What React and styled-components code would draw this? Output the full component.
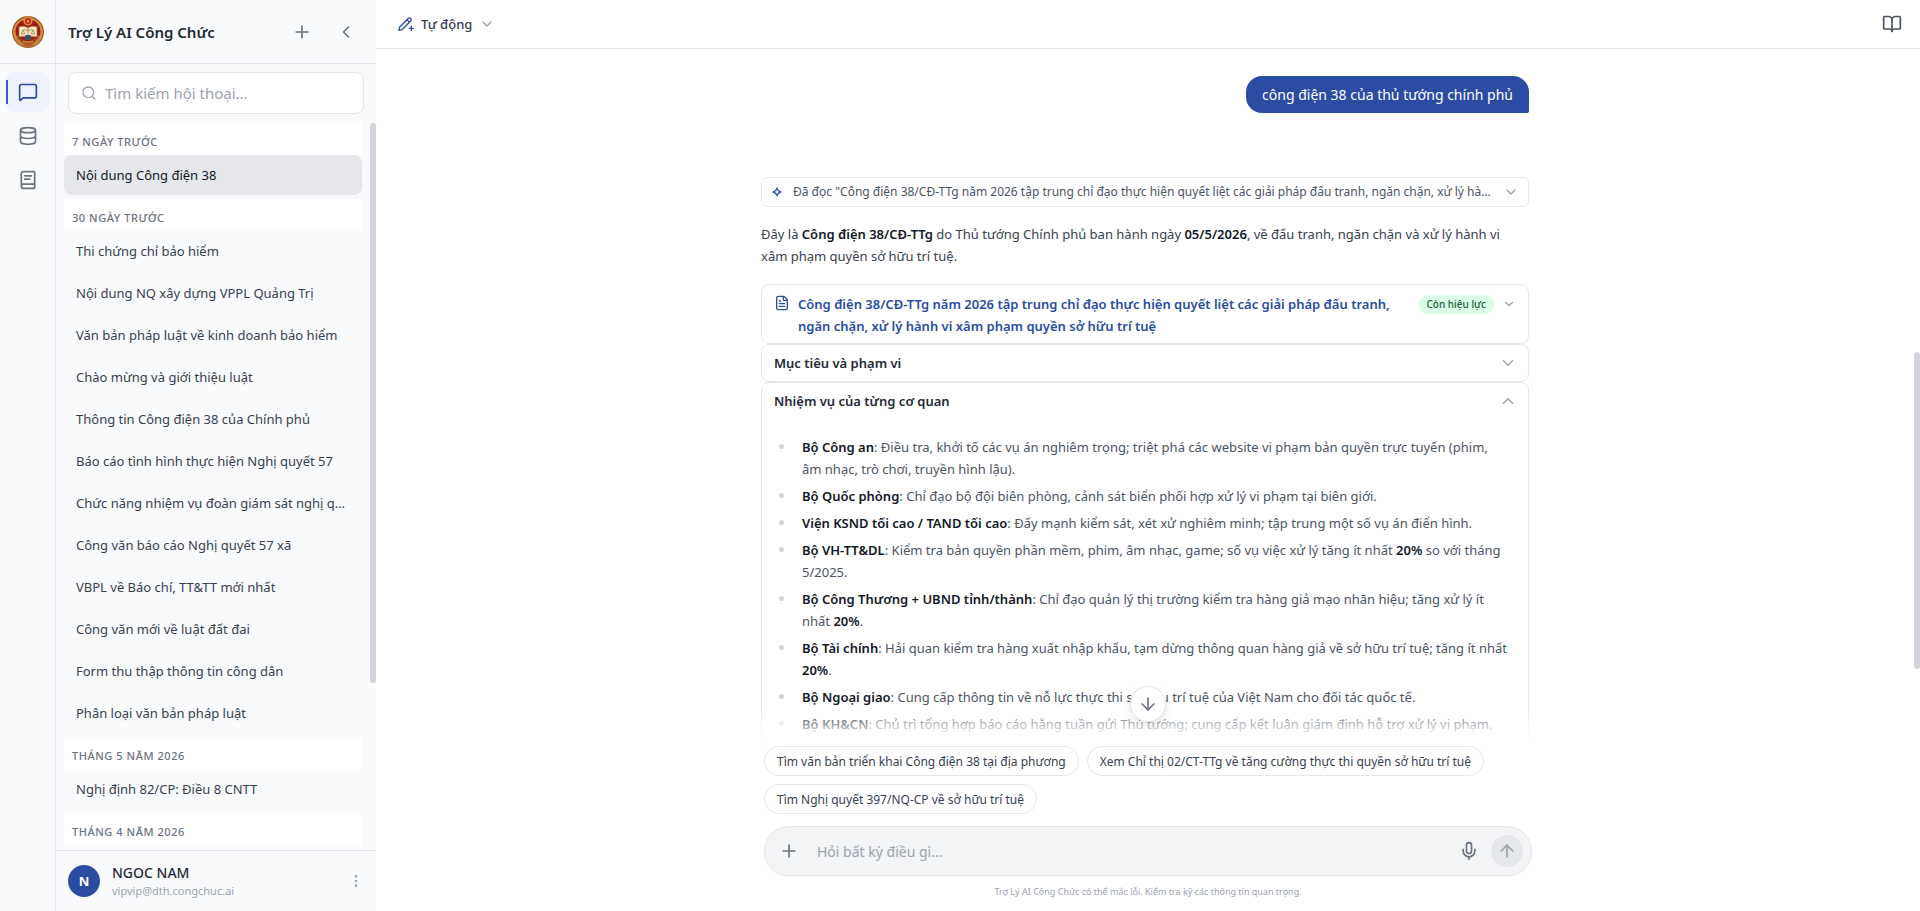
import { useState } from "react";
import styled, { createGlobalStyle } from "styled-components";
import {
  ArrowDown,
  ArrowUp,
  BookOpen,
  ChevronDown,
  ChevronLeft,
  ChevronUp,
  Database,
  EllipsisVertical,
  FileText,
  MessageSquare,
  Mic,
  Plus,
  Search,
} from "lucide-react";

const sections = [
  { title: "7 ngày trước", items: ["Nội dung Công điện 38"] },
  {
    title: "30 ngày trước",
    items: [
      "Thi chứng chỉ bảo hiểm",
      "Nội dung NQ xây dựng VPPL Quảng Trị",
      "Văn bản pháp luật về kinh doanh bảo hiểm",
      "Chào mừng và giới thiệu luật",
      "Thông tin Công điện 38 của Chính phủ",
      "Báo cáo tình hình thực hiện Nghị quyết 57",
      "Chức năng nhiệm vụ đoàn giám sát nghị quyết",
      "Công văn báo cáo Nghị quyết 57 xã",
      "VBPL về Báo chí, TT&TT mới nhất",
      "Công văn mới về luật đất đai",
      "Form thu thập thông tin công dân",
      "Phân loại văn bản pháp luật",
    ],
  },
  { title: "Tháng 5 năm 2026", items: ["Nghị định 82/CP: Điều 8 CNTT"] },
  { title: "Tháng 4 năm 2026", items: [] },
];

const docTitle =
  "Công điện 38/CĐ-TTg năm 2026 tập trung chỉ đạo thực hiện quyết liệt các giải pháp đấu tranh, ngăn chặn, xử lý hành vi xâm phạm quyền sở hữu trí tuệ";

const suggestions = [
  "Tìm văn bản triển khai Công điện 38 tại địa phương",
  "Xem Chỉ thị 02/CT-TTg về tăng cường thực thi quyền sở hữu trí tuệ",
  "Tìm Nghị quyết 397/NQ-CP về sở hữu trí tuệ",
];

const Logo = () => (
  <svg width="32" height="32" viewBox="0 0 32 32" aria-hidden="true">
    <circle cx="16" cy="16" r="16" fill="#a8622a" />
    <circle cx="16" cy="16" r="14.6" fill="#cf8f45" />
    <circle cx="16" cy="15.6" r="12.4" fill="#9c1a1a" />
    <path d="M3 17c1 8 7 12 13 12s12-4 13-12c-3 6-8 8-13 8S6 23 3 17z" fill="#bd7d35" />
    <path d="M6 22l5 4M26 22l-5 4M9 26l3-3M23 26l-3-3" stroke="#8c3a1c" strokeWidth="1" />
    <path d="M7 11c3-1 6-1 9 1 3-2 6-2 9-1v10c-3-1-6-1-9 1-3-2-6-2-9-1z" fill="#f6e8c8" stroke="#b98238" strokeWidth=".7" />
    <path d="M16 11v9M11 14h10M11 14l-1.8 4h3.6zM21 14l-1.8 4h3.6z" stroke="#b0813f" strokeWidth=".8" fill="none" />
    <circle cx="16" cy="5" r="4.6" fill="#cf8f45" />
    <circle cx="16" cy="5" r="3" fill="#c21f1a" />
    <path d="M16 3l.6 1.4 1.5.1-1.2 1 .4 1.5-1.3-.8-1.3.8.4-1.5-1.2-1 1.5-.1z" fill="#e8a04a" />
    <rect x="13" y="19" width="6" height="5" rx="1" fill="#3c5560" />
    <path d="M11 26.500h10v2.500c-3 1.500-7 1.500-10 0z" fill="#b3552a" />
  </svg>
);

const LibraryIcon = () => (
  <svg width="20" height="20" viewBox="0 0 24 24" fill="none" stroke="currentColor" strokeWidth="2" strokeLinecap="round" strokeLinejoin="round" aria-hidden="true">
    <path d="M4 19.500v-15A2.500 2.500 0 0 1 6.500 2H19a1 1 0 0 1 1 1v18a1 1 0 0 1-1 1H6.500a1 1 0 0 1 0-5H20" />
    <path d="M8 7h8M8 11h6" />
  </svg>
);

const PenIcon = () => (
  <svg width="16" height="16" viewBox="0 0 16 16" fill="none" stroke="currentColor" strokeWidth="1.300" strokeLinecap="round" strokeLinejoin="round" aria-hidden="true">
    <path d="M1 14.300l.5-3L10.200 2.500a1.700 1.700 0 0 1 2.500 2.500L4 13.700z" />
    <path d="M9 3.800L11.400 6.200M13.300 10.200v4.200M11.200 12.300h4.200" />
  </svg>
);

const SparkIcon = () => (
  <svg width="12" height="12" viewBox="0 0 12 12" fill="none" stroke="currentColor" strokeWidth="1.300" strokeLinejoin="round" aria-hidden="true">
    <path d="M6 2C6.400 4.300 7.700 5.600 10 6 7.700 6.400 6.400 7.700 6 10 5.600 7.700 4.300 6.400 2 6 4.300 5.600 5.600 4.300 6 2z" />
  </svg>
);

const App = () => {
  const [active, setActive] = useState("Nội dung Công điện 38");
  const [search, setSearch] = useState("");
  const [message, setMessage] = useState("");
  const [goalOpen, setGoalOpen] = useState(false);
  const [taskOpen, setTaskOpen] = useState(true);

  return (
    <>
      <GlobalStyle />
      <Page>
        <Rail>
          <RailLogo href="#" aria-label="Trang chủ">
            <Logo />
          </RailLogo>
          <RailNav>
            <RailButton $active aria-label="Hội thoại">
              <MessageSquare size={20} />
            </RailButton>
            <RailButton aria-label="Dữ liệu">
              <Database size={20} />
            </RailButton>
            <RailButton aria-label="Thư viện">
              <LibraryIcon />
            </RailButton>
          </RailNav>
        </Rail>

        <Sidebar>
          <SidebarHeader>
            <Brand>Trợ Lý AI Công Chức</Brand>
            <HeaderButton aria-label="Hội thoại mới">
              <Plus size={20} />
            </HeaderButton>
            <HeaderButton aria-label="Thu gọn">
              <ChevronLeft size={20} />
            </HeaderButton>
          </SidebarHeader>

          <SearchBox>
            <Search size={16} />
            <SearchInput
              type="text"
              aria-label="Tìm kiếm hội thoại"
              placeholder="Tìm kiếm hội thoại..."
              value={search}
              onChange={(e) => setSearch(e.target.value)}
            />
          </SearchBox>

          <History>
            <HistoryList>
              {sections.map((section) => (
                <Section key={section.title}>
                  <SectionTitle>{section.title}</SectionTitle>
                  {section.items.map((item) => (
                    <HistoryItem
                      key={item}
                      $active={item === active}
                      onClick={() => setActive(item)}
                    >
                      {item}
                    </HistoryItem>
                  ))}
                </Section>
              ))}
            </HistoryList>
            <ScrollThumb $top="0" $height="77%" />
          </History>

          <Account>
            <Avatar>N</Avatar>
            <AccountText>
              <AccountName>NGOC NAM</AccountName>
              <AccountMail>vipvip@dth.congchuc.ai</AccountMail>
            </AccountText>
            <MoreButton aria-label="Tùy chọn">
              <EllipsisVertical size={16} />
            </MoreButton>
          </Account>
        </Sidebar>

        <Main>
          <TopBar>
            <ModeButton>
              <PenIcon />
              <span>Tự động</span>
              <ChevronDown size={16} />
            </ModeButton>
            <GuideButton aria-label="Hướng dẫn">
              <BookOpen size={20} />
            </GuideButton>
          </TopBar>

          <Chat>
            <Thread>
              <UserMessage>công điện 38 của thủ tướng chính phủ</UserMessage>

              <Answer>
                <ReadButton>
                  <SparkIcon />
                  <ReadText>Đã đọc "{docTitle}"</ReadText>
                  <ChevronDown size={16} />
                </ReadButton>

                <Intro>
                  Đây là <Strong>Công điện 38/CĐ-TTg</Strong> do Thủ tướng Chính phủ ban hành
                  ngày <Strong>05/5/2026</Strong>, về đấu tranh, ngăn chặn và xử lý hành vi xâm
                  phạm quyền sở hữu trí tuệ.
                </Intro>

                <DocCard>
                  <FileText size={16} />
                  <DocLink href="#">{docTitle}</DocLink>
                  <Badge>Còn hiệu lực</Badge>
                  <DocToggle aria-label="Mở rộng">
                    <ChevronDown size={14} />
                  </DocToggle>
                </DocCard>

                <Panel>
                  <PanelHeader aria-expanded={goalOpen} onClick={() => setGoalOpen(!goalOpen)}>
                    <span>Mục tiêu và phạm vi</span>
                    {goalOpen ? <ChevronUp size={18} /> : <ChevronDown size={18} />}
                  </PanelHeader>
                </Panel>

                <Panel>
                  <PanelHeader aria-expanded={taskOpen} onClick={() => setTaskOpen(!taskOpen)}>
                    <span>Nhiệm vụ của từng cơ quan</span>
                    {taskOpen ? <ChevronUp size={18} /> : <ChevronDown size={18} />}
                  </PanelHeader>
                  {taskOpen && (
                    <TaskList>
                      <Task>
                        <Strong>Bộ Công an</Strong>: Điều tra, khởi tố các vụ án nghiêm trọng;
                        triệt phá các website vi phạm bản quyền trực tuyến (phim, âm nhạc, trò
                        chơi, truyền hình lậu).
                      </Task>
                      <Task>
                        <Strong>Bộ Quốc phòng</Strong>: Chỉ đạo bộ đội biên phòng, cảnh sát biển
                        phối hợp xử lý vi phạm tại biên giới.
                      </Task>
                      <Task>
                        <Strong>Viện KSND tối cao / TAND tối cao</Strong>: Đẩy mạnh kiểm sát, xét
                        xử nghiêm minh; tập trung một số vụ án điển hình.
                      </Task>
                      <Task>
                        <Strong>Bộ VH-TT&amp;DL</Strong>: Kiểm tra bản quyền phần mềm, phim, âm
                        nhạc, game; số vụ việc xử lý tăng ít nhất <Strong>20%</Strong> so với
                        tháng 5/2025.
                      </Task>
                      <Task>
                        <Strong>Bộ Công Thương + UBND tỉnh/thành</Strong>: Chỉ đạo quản lý thị
                        trường kiểm tra hàng giả mạo nhãn hiệu; tăng xử lý ít
                        nhất <Strong>20%</Strong>.
                      </Task>
                      <Task>
                        <Strong>Bộ Tài chính</Strong>: Hải quan kiểm tra hàng xuất nhập khẩu, tạm
                        dừng thông quan hàng giả về sở hữu trí tuệ; tăng ít
                        nhất <Strong>20%</Strong>.
                      </Task>
                      <Task>
                        <Strong>Bộ Ngoại giao</Strong>: Cung cấp thông tin về nỗ lực thực thi sở
                        hữu trí tuệ của Việt Nam cho đối tác quốc tế.
                      </Task>
                      <Task>
                        <Strong>Bộ KH&amp;CN</Strong>: Chủ trì tổng hợp báo cáo hằng tuần gửi Thủ
                        tướng; cung cấp kết luận giám định hỗ trợ xử lý vi phạm.
                      </Task>
                    </TaskList>
                  )}
                </Panel>
              </Answer>
            </Thread>
            <ScrollThumb $top="44%" $height="46%" />
          </Chat>

          <Dock>
            <JumpButton aria-label="Cuộn xuống">
              <ArrowDown size={20} />
            </JumpButton>
            <DockInner>
              <Chips>
                {suggestions.map((text) => (
                  <Chip key={text} onClick={() => setMessage(text)}>
                    {text}
                  </Chip>
                ))}
              </Chips>
              <Composer onSubmit={(e) => e.preventDefault()}>
                <ComposerButton type="button" aria-label="Đính kèm">
                  <Plus size={20} />
                </ComposerButton>
                <ComposerInput
                  type="text"
                  aria-label="Tin nhắn"
                  placeholder="Hỏi bất kỳ điều gì..."
                  value={message}
                  onChange={(e) => setMessage(e.target.value)}
                />
                <ComposerButton type="button" aria-label="Ghi âm">
                  <Mic size={20} />
                </ComposerButton>
                <SendButton type="submit" aria-label="Gửi">
                  <ArrowUp size={20} />
                </SendButton>
              </Composer>
              <Disclaimer>
                Trợ Lý AI Công Chức có thể mắc lỗi. Kiểm tra kỹ các thông tin quan trọng.
              </Disclaimer>
            </DockInner>
          </Dock>
        </Main>
      </Page>
    </>
  );
};

// Styled Components

const GlobalStyle = createGlobalStyle`
  * {
    box-sizing: border-box;
  }

  body {
    margin: 0;
    font-family: "Noto Sans", "Open Sans", sans-serif;
    font-size: 13px;
    color: #374151;
    background: #ffffff;
  }

  button,
  input {
    font: inherit;
    color: inherit;
    padding: 0;
    border: none;
    background: none;
  }

  button {
    cursor: pointer;
  }

  svg {
    flex-shrink: 0;
  }
`;

const Page = styled.div`
  display: flex;
  height: 100vh;
  overflow: hidden;
`;

const Rail = styled.nav`
  display: flex;
  flex-direction: column;
  flex-shrink: 0;
  width: 56px;
  background: #f9fafb;
  border-right: 1px solid #e5e7eb;
`;

const RailLogo = styled.a`
  display: flex;
  align-items: center;
  justify-content: center;
  height: 64px;
  border-bottom: 1px solid #e5e7eb;
`;

const RailNav = styled.div`
  display: flex;
  flex-direction: column;
  gap: 4px;
  padding: 8px 6px;
`;

const RailButton = styled.button`
  position: relative;
  display: flex;
  align-items: center;
  justify-content: center;
  height: 40px;
  border-radius: 8px;
  color: ${(props) => (props.$active ? "#2a4ca3" : "#6b7280")};
  background: ${(props) => (props.$active ? "#eef2ff" : "transparent")};

  &::before {
    content: "";
    display: ${(props) => (props.$active ? "block" : "none")};
    position: absolute;
    left: 0;
    top: 8px;
    bottom: 8px;
    width: 2px;
    background: #3a5bc0;
  }
`;

const Sidebar = styled.aside`
  display: flex;
  flex-direction: column;
  flex-shrink: 0;
  width: 320px;
  background: #f9fafb;
`;

const SidebarHeader = styled.header`
  display: flex;
  align-items: center;
  gap: 8px;
  height: 64px;
  padding: 0 12px;
  border-bottom: 1px solid #e5e7eb;
`;

const Brand = styled.h1`
  flex: 1;
  margin: 0;
  font-size: 15px;
  font-weight: 600;
  color: #1f2937;
`;

const HeaderButton = styled.button`
  display: flex;
  align-items: center;
  justify-content: center;
  width: 36px;
  height: 36px;
  color: #6b7280;
`;

const SearchBox = styled.label`
  display: flex;
  align-items: center;
  gap: 8px;
  height: 42px;
  margin: 8px 12px 9px;
  padding: 0 12px;
  border: 1px solid #e5e7eb;
  border-radius: 8px;
  background: #ffffff;
  color: #9ca3af;
`;

const SearchInput = styled.input`
  flex: 1;
  min-width: 0;
  font-size: 15px;
  color: #1f2937;
  outline: none;

  &::placeholder {
    color: #9ca3af;
  }
`;

const History = styled.div`
  position: relative;
  flex: 1;
  min-height: 0;
  overflow: hidden;
`;

const HistoryList = styled.div`
  display: flex;
  flex-direction: column;
  gap: 4px;
  padding: 0 14px 0 8px;
`;

const Section = styled.section`
  display: flex;
  flex-direction: column;
  gap: 2px;
`;

const SectionTitle = styled.h2`
  margin: 0 0 -2px;
  padding: 11px 8px 5px;
  font-size: 11px;
  line-height: 16px;
  font-weight: 500;
  letter-spacing: 0.05em;
  text-transform: uppercase;
  color: #6b7280;
  background: #ffffff;
`;

const HistoryItem = styled.button`
  height: 40px;
  flex-shrink: 0;
  padding: 0 12px;
  border-radius: 8px;
  text-align: left;
  white-space: nowrap;
  overflow: hidden;
  text-overflow: ellipsis;
  color: ${(props) => (props.$active ? "#111827" : "#374151")};
  background: ${(props) => (props.$active ? "#e5e7eb" : "transparent")};
`;

const ScrollThumb = styled.div`
  position: absolute;
  right: 0;
  top: ${(props) => props.$top};
  width: 6px;
  height: ${(props) => props.$height};
  border-radius: 3px;
  background: #d1d5db;
`;

const Account = styled.footer`
  display: flex;
  align-items: center;
  gap: 12px;
  height: 61px;
  padding: 0 12px;
  border-top: 1px solid #e5e7eb;
`;

const Avatar = styled.div`
  display: flex;
  align-items: center;
  justify-content: center;
  width: 32px;
  height: 32px;
  border-radius: 50%;
  font-weight: 700;
  color: #ffffff;
  background: #2a4ca3;
`;

const AccountText = styled.div`
  flex: 1;
`;

const AccountName = styled.div`
  font-size: 14px;
  line-height: 20px;
  font-weight: 500;
  color: #1f2937;
`;

const AccountMail = styled.div`
  font-size: 11px;
  line-height: 16px;
  color: #9ca3af;
`;

const MoreButton = styled.button`
  display: flex;
  color: #9ca3af;
`;

const Main = styled.main`
  display: flex;
  flex-direction: column;
  flex: 1;
  min-width: 0;
`;

const TopBar = styled.header`
  display: flex;
  align-items: center;
  justify-content: space-between;
  flex-shrink: 0;
  height: 49px;
  padding: 0 18px 0 22px;
  border-bottom: 1px solid #e5e7eb;
`;

const ModeButton = styled.button`
  display: flex;
  align-items: center;
  gap: 7px;
  font-weight: 500;
  color: #374151;

  svg:first-child {
    color: #2a4ca3;
  }

  svg:last-child {
    color: #9ca3af;
  }
`;

const GuideButton = styled.button`
  display: flex;
  color: #4b5563;
`;

const Chat = styled.div`
  position: relative;
  flex: 1;
  min-height: 0;
  overflow: hidden;
  padding-right: 6px;
`;

const Thread = styled.div`
  display: flex;
  flex-direction: column;
  gap: 64px;
  max-width: 768px;
  margin: 0 auto;
  padding-top: 27px;
`;

const UserMessage = styled.div`
  align-self: flex-end;
  padding: 7px 16px;
  border-radius: 16px 16px 2px 16px;
  font-size: 14px;
  line-height: 23px;
  color: #ffffff;
  background: #2a4ca3;
`;

const Answer = styled.article`
  display: flex;
  flex-direction: column;
`;

const ReadButton = styled.button`
  display: flex;
  align-items: center;
  gap: 10px;
  height: 30px;
  padding: 0 9px;
  border: 1px solid #e5e7eb;
  border-radius: 6px;
  font-size: 12px;
  line-height: 20px;
  color: #9ca3af;

  svg:first-child {
    color: #3a5bc0;
  }
`;

const ReadText = styled.span`
  flex: 1;
  min-width: 0;
  overflow: hidden;
  white-space: nowrap;
  text-overflow: ellipsis;
  text-align: left;
  color: #4b5563;
`;

const Intro = styled.p`
  margin: 16px 0 17px;
  line-height: 22px;
`;

const Strong = styled.strong`
  font-weight: 600;
  color: #111827;
`;

const DocCard = styled.div`
  display: flex;
  align-items: flex-start;
  gap: 8px;
  padding: 8px 12px 6px;
  border: 1px solid #e5e7eb;
  border-radius: 8px;
  color: #2a4ca3;

  > svg {
    margin-top: 2px;
  }
`;

const DocLink = styled.a`
  flex: 1;
  line-height: 22px;
  font-weight: 600;
  color: #2a4ca3;
  text-decoration: none;
`;

const Badge = styled.span`
  margin: 2px 0 0 12px;
  padding: 0 8px;
  border-radius: 10px;
  font-size: 10px;
  line-height: 19px;
  font-weight: 500;
  color: #166534;
  background: #dcfce7;
`;

const DocToggle = styled.button`
  display: flex;
  margin-top: 4px;
  color: #9ca3af;
`;

const Panel = styled.section`
  border: 1px solid #e5e7eb;
  border-radius: 8px;
`;

const PanelHeader = styled.button`
  display: flex;
  align-items: center;
  justify-content: space-between;
  width: 100%;
  height: 36px;
  padding: 0 11px 0 12px;
  font-weight: 600;
  color: #1f2937;

  svg {
    color: #9ca3af;
  }
`;

const TaskList = styled.ul`
  display: flex;
  flex-direction: column;
  gap: 5px;
  margin: 0;
  padding: 17px 19px 17px 12px;
  list-style: none;
`;

const Task = styled.li`
  position: relative;
  padding-left: 28px;
  line-height: 22px;
  color: #4b5563;

  &::before {
    content: "";
    position: absolute;
    left: 5px;
    top: 8px;
    width: 5px;
    height: 5px;
    border-radius: 50%;
    background: #d1d5db;
  }
`;

const Dock = styled.div`
  position: relative;
  flex-shrink: 0;
  padding: 8px 0 11px;
  background: #ffffff;

  &::before {
    content: "";
    position: absolute;
    left: 0;
    right: 6px;
    bottom: 100%;
    height: 32px;
    background: linear-gradient(to top, #ffffff, rgba(255, 255, 255, 0));
  }
`;

const DockInner = styled.div`
  display: flex;
  flex-direction: column;
  max-width: 768px;
  margin: 0 auto;
`;

const JumpButton = styled.button`
  position: absolute;
  top: -52px;
  left: calc(50% - 18px);
  display: flex;
  align-items: center;
  justify-content: center;
  width: 36px;
  height: 36px;
  border: 1px solid #e5e7eb;
  border-radius: 50%;
  color: #6b7280;
  background: #ffffff;
  box-shadow: 0 4px 8px rgba(0, 0, 0, 0.1);
`;

const Chips = styled.div`
  display: flex;
  flex-wrap: wrap;
  gap: 8px;
`;

const Chip = styled.button`
  height: 30px;
  padding: 0 12px;
  border: 1px solid #e5e7eb;
  border-radius: 15px;
  font-size: 12px;
  color: #374151;
  background: #ffffff;
`;

const Composer = styled.form`
  display: flex;
  align-items: center;
  height: 50px;
  margin-top: 12px;
  padding: 0 8px;
  border: 1px solid #e5e7eb;
  border-radius: 25px;
  background: #f3f4f6;
  box-shadow: 0 1px 2px rgba(0, 0, 0, 0.05);
`;

const ComposerButton = styled.button`
  display: flex;
  align-items: center;
  justify-content: center;
  width: 32px;
  height: 32px;
  color: #6b7280;
`;

const ComposerInput = styled.input`
  flex: 1;
  min-width: 0;
  padding: 0 12px;
  font-size: 14px;
  color: #1f2937;
  outline: none;

  &::placeholder {
    color: #9ca3af;
  }
`;

const SendButton = styled.button`
  display: flex;
  align-items: center;
  justify-content: center;
  width: 32px;
  height: 32px;
  margin-left: 6px;
  border-radius: 50%;
  color: #9ca3af;
  background: #e5e7eb;
`;

const Disclaimer = styled.p`
  margin: 8px 0 0;
  font-size: 9px;
  line-height: 16px;
  text-align: center;
  color: #9ca3af;
`;

export default App;
